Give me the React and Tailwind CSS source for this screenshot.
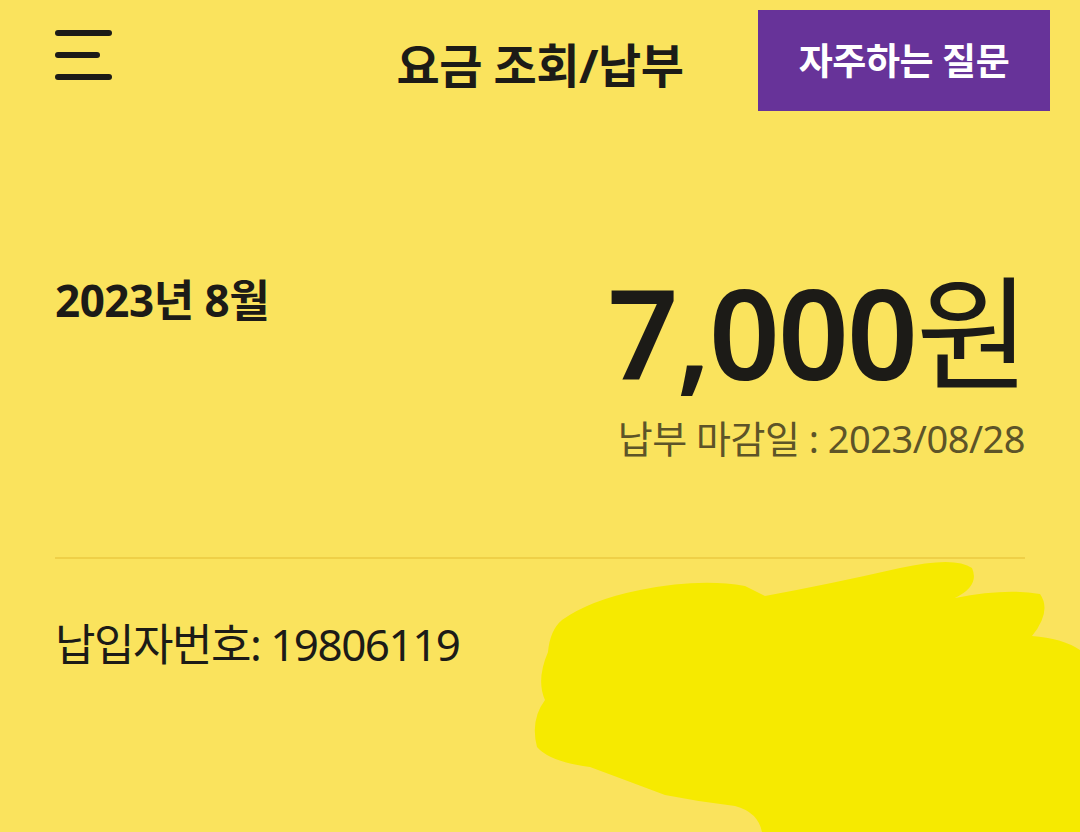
export default function App() {
  const font = { fontFamily: '"Noto Sans", "Noto Sans CJK KR", sans-serif' };

  return (
    <div className="relative w-full h-[832px] overflow-hidden bg-[#fae35d] text-[#1c1b17]" style={font}>
      {/* Header */}
      <div className="grid grid-cols-[1fr_auto_1fr] items-start">
        <div className="pl-[55px] pt-[30px]">
          <div className="flex flex-col gap-[16px] w-[57px]">
            <span className="block h-[6px] rounded-full bg-[#1c1b17]"></span>
            <span className="block h-[6px] w-[45px] rounded-full bg-[#1c1b17]"></span>
            <span className="block h-[6px] rounded-full bg-[#1c1b17]"></span>
          </div>
        </div>
        <h1 className="pt-[33px] text-[47px] leading-[64px] font-bold tracking-[-0.5px]">요금 조회/납부</h1>
        <div className="flex justify-end pr-[30px] pt-[10px]">
          <button className="w-[292px] h-[101px] bg-[#673399] text-white text-[37px] font-bold tracking-[-0.5px]">
            자주하는 질문
          </button>
        </div>
      </div>

      {/* Bill summary */}
      <div className="px-[55px] pt-[158px]">
        <div className="flex justify-between items-start">
          <div className="text-[44px] leading-[56px] font-bold tracking-[-0.5px] mt-[3px]">2023년 8월</div>
          <div className="flex flex-col items-end">
            <div className="text-[124px] leading-[130px] font-semibold tracking-[-2px] -mt-[2px] mr-[-3px]">
              7,000<span className="font-normal">원</span>
            </div>
            <div className="text-[38px] leading-[50px] text-[#5d5428] mt-[16px] tracking-[-0.5px]">
              납부 마감일 : 2023/08/28
            </div>
          </div>
        </div>

        <div className="mt-[94px] h-[2px] bg-[#efd047]"></div>

        <div className="mt-[57px] text-[44px] leading-[56px] tracking-[-1.5px]">납입자번호: 19806119</div>
      </div>

      {/* redaction scribble */}
      <svg className="absolute left-0 top-0" width="1080" height="832" viewBox="0 0 1080 832">
        <path
          fill="#f6ea00"
          d="M562 620 Q590 600 640 590 Q700 578 745 586 L765 596 Q830 584 900 568 Q955 556 972 568 Q980 586 955 598 Q1005 588 1040 594 Q1052 611 1032 636 Q1062 638 1080 650 L1080 832 L762 832 Q758 812 735 806 Q700 802 665 795 Q625 780 590 767 Q550 762 537 747 Q530 720 545 700 Q536 680 548 652 Q550 630 562 620 Z"
        />
      </svg>
    </div>
  );
}
